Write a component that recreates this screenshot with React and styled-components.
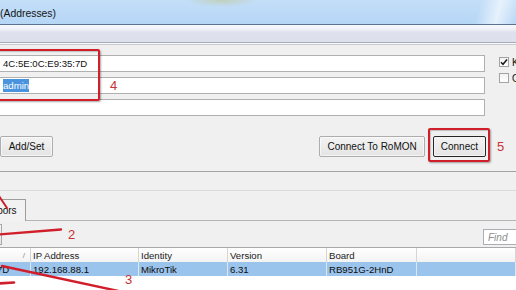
import React from "react";
import styled, { createGlobalStyle } from "styled-components";

const Global = createGlobalStyle`
  html, body { margin: 0; padding: 0; }
  body {
    width: 516px; height: 290px; overflow: hidden;
    background: #f0f0f0;
    font-family: "Liberation Sans", Arial, sans-serif;
  }
`;

const Window = styled.div`
  position: relative;
  width: 516px;
  height: 290px;
  overflow: hidden;
  background: #f0f0f0;
  display: flex;
  flex-direction: column;
`;

const TitleBar = styled.div`
  flex: none;
  height: 24px;
  border-bottom: 1px solid #5b7390;
  background:
    radial-gradient(ellipse 36px 7px at 222px 0px, rgba(192, 204, 168, 0.75), rgba(192, 204, 168, 0) 100%),
    linear-gradient(105deg, rgba(255,255,255,0) 92%, rgba(235,244,252,0.9) 96%, rgba(255,255,255,0) 100%),
    linear-gradient(#c3def8, #b6d6f6);
  display: flex;
  align-items: center;
`;

const TitleText = styled.span`
  font-size: 10.4px;
  color: #141414;
  margin-top: 2px;
`;

const MenuStrip = styled.div`
  flex: none;
  height: 17px;
  background: linear-gradient(#f6f7fb 0, #f1f3f8 4px, #dfe2ee 7px, #dcdfec 100%);
  border-bottom: 1px solid #a6aab6;
  box-shadow: 0 1px 0 #fbfbfb, 0 2px 0 #c8cad1;
`;

const FormArea = styled.div`
  display: flex;
  gap: 14px;
  margin-top: 12px;
  margin-left: -12px;
`;

const Fields = styled.div`
  flex: none;
  width: 497px;
  display: flex;
  flex-direction: column;
  gap: 5px;
`;

const Field = styled.div`
  height: 17px;
  box-sizing: border-box;
  background: #fff;
  border: 1px solid #b0b0b0;
  padding-left: 14px;
  display: flex;
  align-items: center;
  font-size: 9.6px;
  color: #111;
`;

const Selected = styled.span`
  background: #4a93de;
  color: #fff;
  padding: 1px 0;
`;

const Options = styled.div`
  display: flex;
  flex-direction: column;
  gap: 6px;
  padding-top: 2px;
`;

const CheckRow = styled.div`
  height: 10px;
  display: flex;
  align-items: center;
  gap: 3px;
  font-size: 10px;
  white-space: nowrap;
  color: #111;
`;

const CheckBox = styled.span`
  flex: none;
  width: 10px;
  height: 10px;
  box-sizing: border-box;
  border: 1px solid #a3a3a3;
  background: linear-gradient(#f2f2f2, #fff);
  display: flex;
  align-items: center;
  justify-content: center;
`;

const ButtonRow = styled.div`
  display: flex;
  align-items: center;
  gap: 8px;
  margin-top: 20px;
  padding-right: 30px;
`;

const Spacer = styled.div`
  flex: 1;
`;

const Button = styled.div`
  height: 21px;
  box-sizing: border-box;
  min-width: ${(p) => p.$min || 0}px;
  padding: 0 7px;
  display: flex;
  align-items: center;
  justify-content: center;
  font-size: 10px;
  color: #111;
  background: linear-gradient(#f3f3f3, #e4e4e4);
  border: 1px solid ${(p) => (p.$default ? "#262626" : "#adadad")};
  border-radius: 2px;
  box-shadow: inset 0 0 0 1px ${(p) => (p.$default ? "#f4f4f4" : "rgba(255,255,255,0.6)")};
`;

const Rule = styled.div`
  margin-top: 14px;
  border-top: 1px solid #a2a2a2;
`;

const LowerPanel = styled.div`
  flex: 1;
  margin-top: 18px;
  border-top: 1px solid #dadada;
  display: flex;
  flex-direction: column;
`;

const TabStrip = styled.div`
  height: 29px;
  display: flex;
  align-items: flex-end;
  border-bottom: 1px solid #b5b5b5;
`;

const Tab = styled.div`
  height: 22px;
  box-sizing: border-box;
  margin-left: -36px;
  margin-bottom: -1px;
  padding: 0 8px 0 6px;
  border: 1px solid #9d9d9d;
  border-bottom: none;
  background: #f2f2f2;
  display: flex;
  align-items: center;
  font-size: 10px;
  color: #111;
`;

const Toolbar = styled.div`
  height: 26px;
  box-sizing: border-box;
  display: flex;
  align-items: flex-end;
  justify-content: space-between;
  padding-bottom: 2px;
`;

const ToolButton = styled.div`
  width: 24px;
  height: 21px;
  box-sizing: border-box;
  margin-left: -22px;
  border: 1px solid #a8a8a8;
  background: linear-gradient(#f5f5f5, #e6e6e6);
`;

const FindBox = styled.div`
  width: 44px;
  height: 16px;
  box-sizing: border-box;
  margin-right: -11px;
  background: #fff;
  border: 1px solid #abadb3;
  padding-left: 4px;
  display: flex;
  align-items: center;
  font-size: 10px;
  font-style: italic;
  color: #8c8c8c;
`;

const Table = styled.div`
  flex: 1;
  margin-left: -77px;
  width: 593px;
  display: flex;
  flex-direction: column;
  background: #fff;
  border-top: 1px solid #a9a9a9;
`;

const Grid = styled.div`
  display: grid;
  grid-template-columns: 108px 108px 89px 99px 90px 1fr;
  height: 14px;
  background: ${(p) => (p.$selected ? "#9bc4ec" : "linear-gradient(#ffffff, #f3f3f3)")};
`;

const Cell = styled.div`
  box-sizing: border-box;
  border-right: 1px solid ${(p) => (p.$selected ? "rgba(235,244,253,0.75)" : "#d5d5d5")};
  padding: 0 5px 0 2px;
  display: flex;
  align-items: center;
  justify-content: space-between;
  font-size: 9.6px;
  color: ${(p) => (p.$selected ? "#0c0c0c" : "#222")};
  white-space: nowrap;
  overflow: hidden;
`;

const SortMark = styled.span`
  color: #8a8a8a;
  font-size: 8px;
`;

const Annotation = styled.div`
  position: absolute;
  left: ${(p) => p.$x}px;
  top: ${(p) => p.$y}px;
  width: ${(p) => p.$w}px;
  height: ${(p) => p.$h}px;
  box-sizing: border-box;
  border: 2px solid #d01f2a;
  border-radius: 2px;
  box-shadow: 1px 1px 2px rgba(0, 0, 0, 0.35), inset 1px 1px 1px rgba(0, 0, 0, 0.2);
`;

const Label = styled.span`
  position: absolute;
  left: ${(p) => p.$x}px;
  top: ${(p) => p.$y}px;
  font-size: 13px;
  line-height: 13px;
  color: #c83036;
`;

const Overlay = styled.svg`
  position: absolute;
  left: 0;
  top: 0;
  pointer-events: none;
`;

const columns = ["MAC Address", "IP Address", "Identity", "Version", "Board", ""];
const row = ["4C:5E:0C:E9:35:7D", "192.168.88.1", "MikroTik", "6.31", "RB951G-2HnD", ""];

export default function App() {
  return (
    <Window>
      <Global />
      <TitleBar>
        <TitleText>(Addresses)</TitleText>
      </TitleBar>
      <MenuStrip />
      <FormArea>
        <Fields>
          <Field>4C:5E:0C:E9:35:7D</Field>
          <Field>
            <Selected>admin</Selected>
          </Field>
          <Field />
        </Fields>
        <Options>
          <CheckRow>
            <CheckBox>
              <svg width="8" height="8" viewBox="0 0 8 8">
                <path d="M1 4.2 L3 6.3 L7 1.5" fill="none" stroke="#1b1b1b" strokeWidth="1.5" />
              </svg>
            </CheckBox>
            Keep Password
          </CheckRow>
          <CheckRow>
            <CheckBox />
            Open In New Window
          </CheckRow>
        </Options>
      </FormArea>
      <ButtonRow>
        <Button $min={53}>Add/Set</Button>
        <Spacer />
        <Button>Connect To RoMON</Button>
        <Button $default>Connect</Button>
      </ButtonRow>
      <Rule />
      <LowerPanel>
        <TabStrip>
          <Tab>Neighbors</Tab>
        </TabStrip>
        <Toolbar>
          <ToolButton />
          <FindBox>Find</FindBox>
        </Toolbar>
        <Table>
          <Grid>
            {columns.map((c, i) => (
              <Cell key={i}>
                <span>{c}</span>
                {i === 0 && <SortMark>/</SortMark>}
              </Cell>
            ))}
          </Grid>
          <Grid $selected>
            {row.map((c, i) => (
              <Cell key={i} $selected>
                <span>{c}</span>
              </Cell>
            ))}
          </Grid>
        </Table>
      </LowerPanel>

      <Annotation $x={-6} $y={49} $w={106} $h={52} />
      <Annotation $x={428} $y={128} $w={62} $h={34} />
      <Label $x={110} $y={79}>4</Label>
      <Label $x={497} $y={140}>5</Label>
      <Label $x={68} $y={228}>2</Label>
      <Label $x={125} $y={273}>3</Label>
      <Overlay width="516" height="290" viewBox="0 0 516 290">
        <g stroke="#d01f2a" strokeLinecap="round" fill="none">
          <path d="M-2 234.5 L61 229.5" strokeWidth="2.4" />
          <path d="M2 266 L123 292" strokeWidth="2.4" />
          <path d="M-2 283.5 L14 282.5" strokeWidth="2.6" />
          <path d="M-1 196 L7 208" strokeWidth="2" />
        </g>
      </Overlay>
    </Window>
  );
}
